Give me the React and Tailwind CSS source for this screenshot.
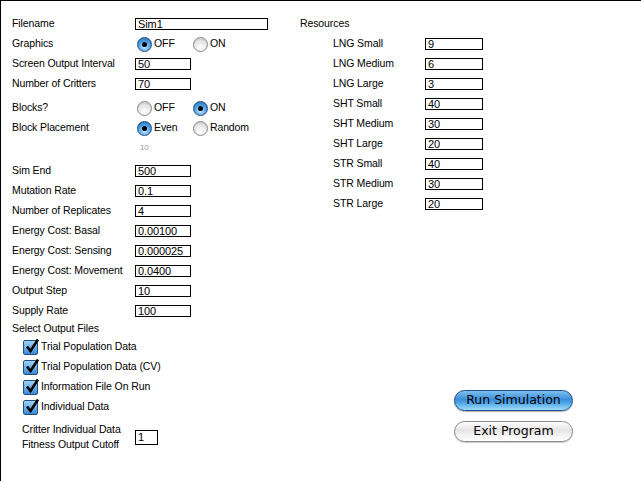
import React from 'react';

const font = { fontFamily: '"Liberation Sans", Arial, sans-serif' };

function Field({ value, w = 'w-[56px]' }) {
  return (
    <div className={`${w} h-[12px] border border-black bg-white text-[11px] leading-[10px] pl-[2px] text-black`}>
      {value}
    </div>
  );
}

function Radio({ on }) {
  return on ? (
    <span className="inline-flex items-center justify-center w-[15px] h-[15px] rounded-full border border-[#1d4f86] bg-[radial-gradient(circle_at_50%_70%,#bfe6ff_0%,#4a9be0_55%,#1f5fa8_100%)]">
      <span className="w-[5px] h-[5px] rounded-full bg-black" />
    </span>
  ) : (
    <span className="inline-block w-[15px] h-[15px] rounded-full border border-[#8a8a8a] bg-[radial-gradient(circle_at_50%_75%,#ffffff_0%,#e6e6e6_55%,#bdbdbd_100%)]" />
  );
}

function RadioRow({ label, opts, sel, className = '' }) {
  return (
    <div className={`flex items-center h-[20px] ${className}`}>
      <span className="w-[125px]">{label}</span>
      {opts.map((o, i) => (
        <span key={o} className="flex items-center w-[56px] gap-[2px]">
          <Radio on={i === sel} />
          <span>{o}</span>
        </span>
      ))}
    </div>
  );
}

function Row({ label, value, w, lw = 'w-[123px]', className = '' }) {
  return (
    <div className={`flex items-center h-[20px] ${className}`}>
      <span className={lw}>{label}</span>
      <Field value={value} w={w} />
    </div>
  );
}

function Check({ label }) {
  return (
    <div className="flex items-center h-[20px] pl-[11px] gap-[3px]">
      <span className="relative w-[15px] h-[15px] rounded-[2px] border border-[#1d4f86] bg-[linear-gradient(#9dd3f7,#3d8ad6)]">
        <svg viewBox="0 0 16 16" className="absolute -top-[3px] left-0 w-[16px] h-[16px]">
          <path d="M3 8.5 L6.5 13 L14 1.5" fill="none" stroke="#000" strokeWidth="2.6" strokeLinejoin="miter" />
        </svg>
      </span>
      <span>{label}</span>
    </div>
  );
}

export default function App() {
  const resources = [
    ['LNG Small', '9'], ['LNG Medium', '6'], ['LNG Large', '3'],
    ['SHT Small', '40'], ['SHT Medium', '30'], ['SHT Large', '20'],
    ['STR Small', '40'], ['STR Medium', '30'], ['STR Large', '20'],
  ];

  return (
    <div className="w-[641px] h-[481px] bg-white border-t border-l border-black flex text-[10.5px] tracking-[-0.1px] text-black overflow-hidden" style={font}>
      {/* Left column */}
      <div className="w-[288px] pl-[11px] pt-[13px] flex flex-col">
        <Row label="Filename" value="Sim1" w="w-[133px]" />
        <RadioRow label="Graphics" opts={['OFF', 'ON']} sel={0} />
        <Row label="Screen Output Interval" value="50" />
        <Row label="Number of Critters" value="70" />
        <RadioRow label="Blocks?" opts={['OFF', 'ON']} sel={1} className="mt-[4px]" />
        <RadioRow label="Block Placement" opts={['Even', 'Random']} sel={0} />
        <div className="h-[20px] flex items-center pl-[128px] text-[8px] text-[#9a9a9a]">10</div>
        <Row label="Sim End" value="500" className="mt-[3px]" />
        <Row label="Mutation Rate" value="0.1" />
        <Row label="Number of Replicates" value="4" />
        <Row label="Energy Cost: Basal" value="0.00100" />
        <Row label="Energy Cost: Sensing" value="0.000025" />
        <Row label="Energy Cost: Movement" value="0.0400" />
        <Row label="Output Step" value="10" />
        <Row label="Supply Rate" value="100" />
        <div className="h-[16px] flex items-center">Select Output Files</div>
        <Check label="Trial Population Data" />
        <Check label="Trial Population Data (CV)" />
        <Check label="Information File On Run" />
        <Check label="Individual Data" />
        <div className="flex items-center mt-[5px] pl-[10px]">
          <div className="w-[113px] leading-[15px]">
            <div>Critter Individual Data</div>
            <div>Fitness Output Cutoff</div>
          </div>
          <div className="w-[23px] h-[15px] border border-black text-[11px] leading-[13px] pl-[2px]">1</div>
        </div>
      </div>

      {/* Right column */}
      <div className="flex-1 pl-[11px] pt-[13px] flex flex-col">
        <div className="h-[20px] flex items-center">Resources</div>
        <div className="pl-[33px]">
          {resources.map(([l, v]) => (
            <Row key={l} label={l} value={v} lw="w-[92px]" w="w-[58px]" />
          ))}
        </div>
        <div className="mt-[176px] ml-[154px] flex flex-col gap-[10px]" style={{ fontFamily: '"DejaVu Sans", Verdana, sans-serif' }}>
          <button className="w-[119px] h-[21px] rounded-full border border-[#1f4f86] bg-[linear-gradient(#7cc0ee_0%,#3d8ed8_45%,#4aa2e4_60%,#9fdcfb_100%)] text-[12.5px] tracking-normal text-black leading-none shadow-[0_1px_1px_rgba(0,0,0,0.3)]">
            Run Simulation
          </button>
          <button className="w-[119px] h-[21px] rounded-full border border-[#8a8a8a] bg-[linear-gradient(#fdfdfd_0%,#e4e4e4_45%,#eeeeee_60%,#ffffff_100%)] text-[12.5px] tracking-normal text-black leading-none shadow-[0_1px_1px_rgba(0,0,0,0.2)]">
            Exit Program
          </button>
        </div>
      </div>
    </div>
  );
}
